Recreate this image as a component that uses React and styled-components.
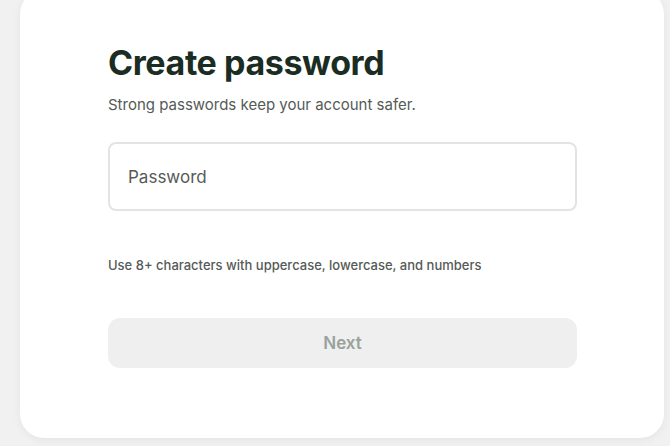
import React, { useState } from 'react';
import styled, { createGlobalStyle } from 'styled-components';

const GlobalStyle = createGlobalStyle`
  html, body {
    margin: 0;
    padding: 0;
    background: #f1f1f1;
    font-family: Inter, "Noto Sans", sans-serif;
    overflow: hidden;
  }
`;

const Page = styled.div`
  width: 670px;
  height: 446px;
  padding: 0 6px 0 20px;
  box-sizing: border-box;
  overflow: hidden;
`;

const Card = styled.div`
  margin-top: -10px;
  height: 448px;
  background: #ffffff;
  border-radius: 24px;
  box-shadow: 0 2px 8px rgba(0, 0, 0, 0.06);
  box-sizing: border-box;
  padding: 51px 87px 0 88px;
  display: flex;
  flex-direction: column;
`;

const Title = styled.h1`
  margin: 0;
  font-size: 34px;
  line-height: 44px;
  font-weight: 700;
  color: #1b2d23;
  letter-spacing: -0.4px;
`;

const Subtitle = styled.p`
  margin: 10px 0 0;
  font-size: 15px;
  line-height: 20px;
  color: #555a57;
`;

const Field = styled.input`
  margin-top: 27px;
  height: 69px;
  box-sizing: border-box;
  border: 2px solid #e3e3e3;
  border-radius: 8px;
  padding: 0 18px;
  font-family: inherit;
  font-size: 17px;
  color: #222;
  outline: none;

  &::placeholder {
    color: #555a57;
  }
`;

const Hint = styled.p`
  margin: 45px 0 0;
  font-size: 13px;
  line-height: 18px;
  font-weight: 500;
  color: #555a57;
`;

const Button = styled.button`
  margin-top: 44px;
  height: 50px;
  border: none;
  border-radius: 12px;
  background: #efefef;
  color: #9aa29e;
  font-family: inherit;
  font-size: 17px;
  font-weight: 600;
  cursor: ${(p) => (p.disabled ? 'default' : 'pointer')};
`;

export default function App() {
  const [value, setValue] = useState('');
  const valid = value.length >= 8;

  return (
    <>
      <GlobalStyle />
      <Page>
        <Card>
          <Title>Create password</Title>
          <Subtitle>Strong passwords keep your account safer.</Subtitle>
          <Field
            type="password"
            placeholder="Password"
            value={value}
            onChange={(e) => setValue(e.target.value)}
          />
          <Hint>Use 8+ characters with uppercase, lowercase, and numbers</Hint>
          <Button disabled={!valid}>Next</Button>
        </Card>
      </Page>
    </>
  );
}
